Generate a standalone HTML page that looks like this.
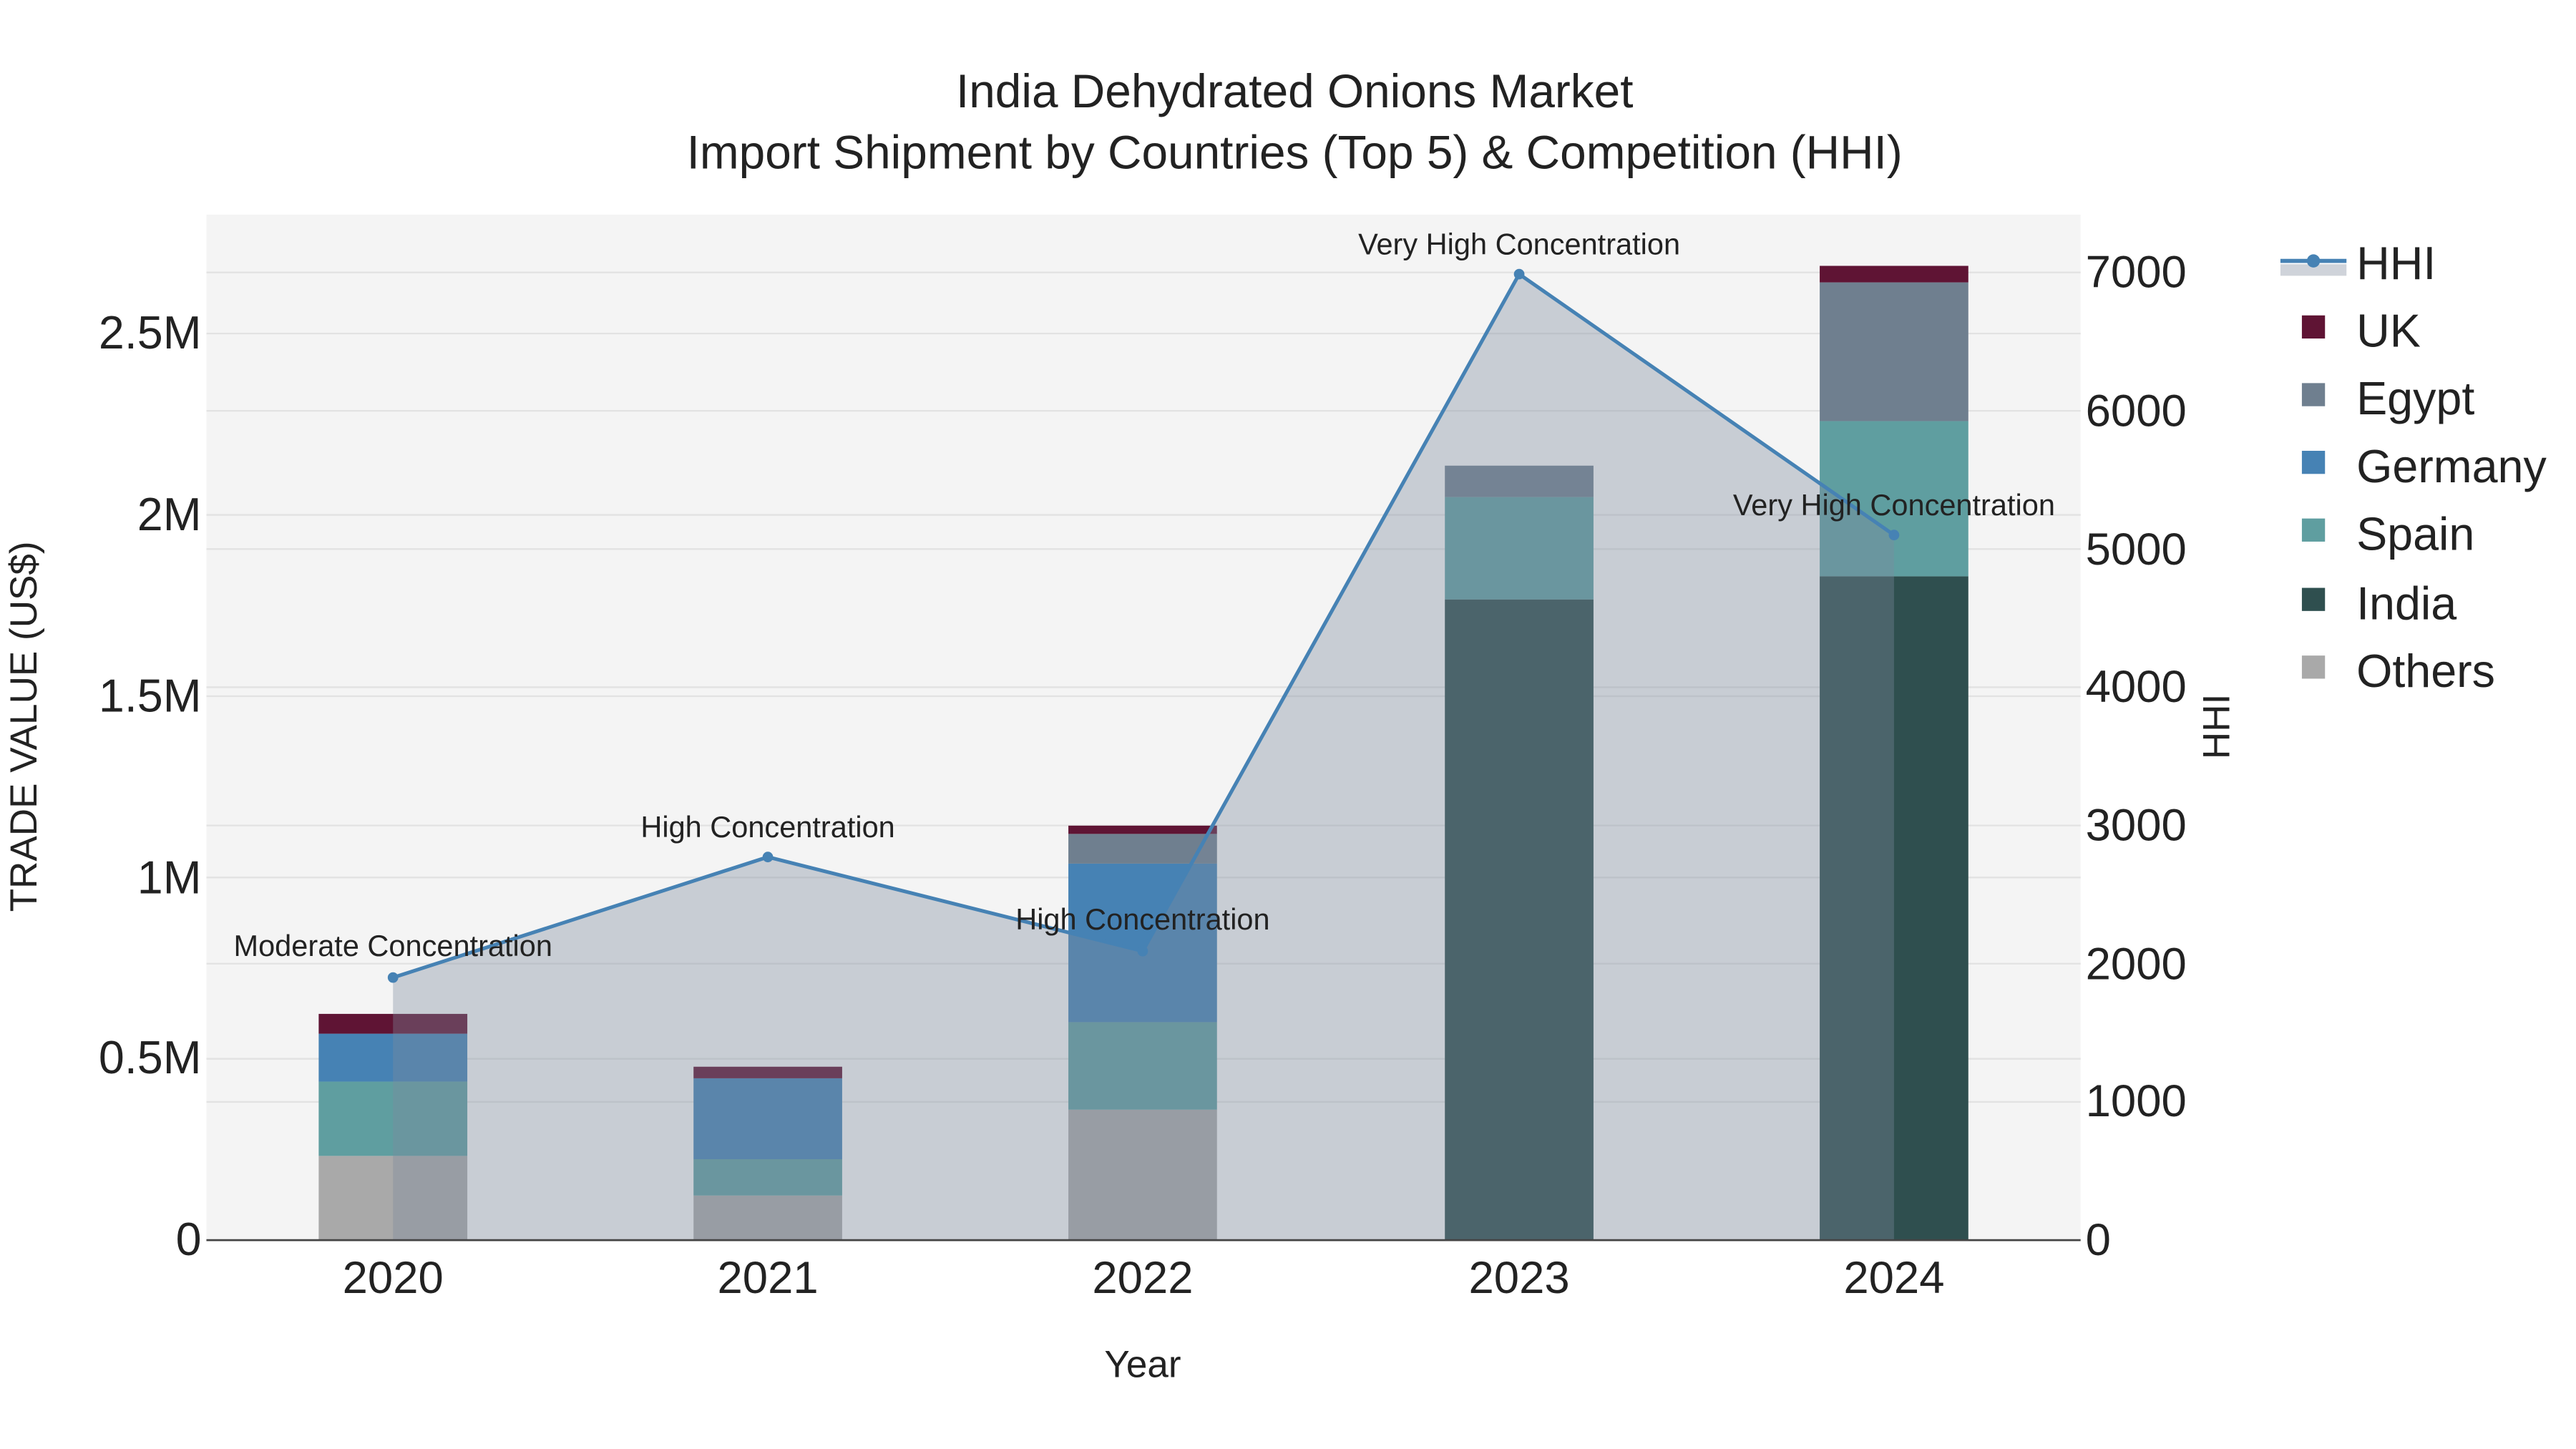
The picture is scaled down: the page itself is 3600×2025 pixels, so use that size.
<!DOCTYPE html>
<html><head><meta charset="utf-8"><style>
html,body{margin:0;padding:0;background:#fff;}
svg{display:block;}
text{font-family:"Liberation Sans",sans-serif;fill:#222;}
</style></head><body>
<svg width="3600" height="2025" viewBox="0 0 1560 877.5" xmlns="http://www.w3.org/2000/svg">
<rect x="0" y="0" width="1560" height="877.5" fill="#fff"/>
<rect x="125" y="130" width="1135" height="621" fill="#f4f4f4"/>
<g stroke="#e2e2e2" stroke-width="1">
<line x1="125" x2="1260" y1="641.2" y2="641.2"/><line x1="125" x2="1260" y1="531.4" y2="531.4"/>
<line x1="125" x2="1260" y1="421.6" y2="421.6"/><line x1="125" x2="1260" y1="311.8" y2="311.8"/>
<line x1="125" x2="1260" y1="202" y2="202"/>
<line x1="125" x2="1260" y1="667.3" y2="667.3"/><line x1="125" x2="1260" y1="583.6" y2="583.6"/>
<line x1="125" x2="1260" y1="499.9" y2="499.9"/><line x1="125" x2="1260" y1="416.2" y2="416.2"/>
<line x1="125" x2="1260" y1="332.5" y2="332.5"/><line x1="125" x2="1260" y1="248.8" y2="248.8"/>
<line x1="125" x2="1260" y1="165" y2="165"/>
</g>
<g>
<rect x="193" y="700" width="90" height="51" fill="#a9a9a9"/>
<rect x="193" y="655" width="90" height="45" fill="#5f9ea0"/>
<rect x="193" y="626" width="90" height="29" fill="#4682b4"/>
<rect x="193" y="614" width="90" height="12" fill="#5f1434"/>

<rect x="420" y="724" width="90" height="27" fill="#a9a9a9"/>
<rect x="420" y="702" width="90" height="22" fill="#5f9ea0"/>
<rect x="420" y="653" width="90" height="49" fill="#4682b4"/>
<rect x="420" y="646" width="90" height="7" fill="#5f1434"/>

<rect x="647" y="672" width="90" height="79" fill="#a9a9a9"/>
<rect x="647" y="619" width="90" height="53" fill="#5f9ea0"/>
<rect x="647" y="523" width="90" height="96" fill="#4682b4"/>
<rect x="647" y="505" width="90" height="18" fill="#6f7f8f"/>
<rect x="647" y="500" width="90" height="5" fill="#5f1434"/>

<rect x="875" y="363" width="90" height="388" fill="#2f4f4f"/>
<rect x="875" y="301" width="90" height="62" fill="#5f9ea0"/>
<rect x="875" y="282" width="90" height="19" fill="#6f7f8f"/>

<rect x="1102" y="349" width="90" height="402" fill="#2f4f4f"/>
<rect x="1102" y="255" width="90" height="94" fill="#5f9ea0"/>
<rect x="1102" y="171" width="90" height="84" fill="#6f7f8f"/>
<rect x="1102" y="161" width="90" height="10" fill="#5f1434"/>
</g>
<polygon points="238,751 238,592 465,519 692,576 920,166 1147,324 1147,751" fill="rgb(126,137,158)" fill-opacity="0.37"/>
<polyline points="238,592 465,519 692,576 920,166 1147,324" fill="none" stroke="#4682b4" stroke-width="2.2"/>
<g fill="#4682b4"><circle cx="238" cy="592" r="3.2"/><circle cx="465" cy="519" r="3.2"/><circle cx="692" cy="576" r="3.2"/><circle cx="920" cy="166" r="3.2"/><circle cx="1147" cy="324" r="3.2"/></g>
<line x1="125" x2="1260" y1="751" y2="751" stroke="#444" stroke-width="1.2"/>
<g font-size="18" text-anchor="middle">
<text x="238" y="579">Moderate Concentration</text>
<text x="465" y="507">High Concentration</text>
<text x="692" y="563">High Concentration</text>
<text x="920" y="154">Very High Concentration</text>
<text x="1147" y="312">Very High Concentration</text>
</g>
<g font-size="28.5" text-anchor="middle">
<text x="784" y="65">India Dehydrated Onions Market</text>
<text x="784" y="102">Import Shipment by Countries (Top 5) &amp; Competition (HHI)</text>
</g>
<g font-size="28" text-anchor="end">
<text x="122" y="760">0</text><text x="122" y="650">0.5M</text><text x="122" y="541">1M</text>
<text x="122" y="431">1.5M</text><text x="122" y="321">2M</text><text x="122" y="211">2.5M</text>
</g>
<g font-size="27.5" text-anchor="start">
<text x="1263" y="760">0</text><text x="1263" y="676">1000</text><text x="1263" y="593">2000</text>
<text x="1263" y="509">3000</text><text x="1263" y="425">4000</text><text x="1263" y="342">5000</text>
<text x="1263" y="258">6000</text><text x="1263" y="174">7000</text>
</g>
<g font-size="27.5" text-anchor="middle">
<text x="238" y="783">2020</text><text x="465" y="783">2021</text><text x="692" y="783">2022</text>
<text x="920" y="783">2023</text><text x="1147" y="783">2024</text>
</g>
<text x="692" y="834" font-size="23" text-anchor="middle">Year</text>
<text transform="translate(22,440) rotate(-90)" font-size="23" text-anchor="middle">TRADE VALUE (US$)</text>
<text transform="translate(1350,440) rotate(-90)" font-size="23" text-anchor="middle">HHI</text>
<rect x="1381" y="160" width="40" height="7" fill="#cfd3da"/>
<line x1="1381" x2="1421" y1="158" y2="158" stroke="#4682b4" stroke-width="2.5"/>
<circle cx="1401" cy="158" r="4" fill="#4682b4"/>
<rect x="1394" y="191" width="14" height="14" fill="#5f1434"/>
<rect x="1394" y="232" width="14" height="14" fill="#6f7f8f"/>
<rect x="1394" y="273" width="14" height="14" fill="#4682b4"/>
<rect x="1394" y="314" width="14" height="14" fill="#5f9ea0"/>
<rect x="1394" y="356" width="14" height="14" fill="#2f4f4f"/>
<rect x="1394" y="397" width="14" height="14" fill="#a9a9a9"/>
<g font-size="28">
<text x="1427" y="169">HHI</text><text x="1427" y="210">UK</text><text x="1427" y="251">Egypt</text>
<text x="1427" y="292">Germany</text><text x="1427" y="333">Spain</text><text x="1427" y="375">India</text>
<text x="1427" y="416">Others</text>
</g>
</svg>
</body></html>
